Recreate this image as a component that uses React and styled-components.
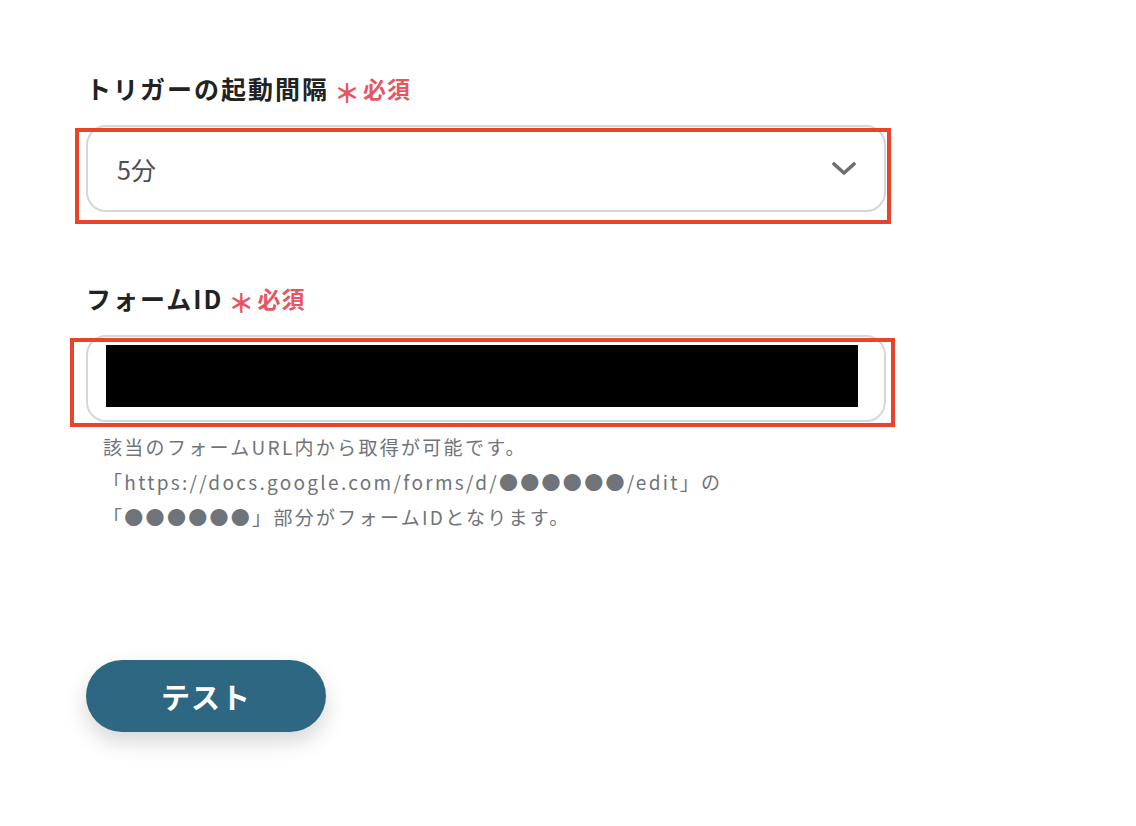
import React from "react";
import styled, { createGlobalStyle } from "styled-components";

const GlobalStyle = createGlobalStyle`
    body {
        margin: 0;
        background: #fff;
        font-family: "Noto Sans CJK JP", "Noto Sans", sans-serif;
    }
`;

const Page = styled.div`
    width: 1136px;
    height: 826px;
    box-sizing: border-box;
    padding: 70px 0 0 86px;
    background: #fff;
`;

const Field = styled.section`
    width: 800px;
    margin-bottom: ${p => p.$gap || 0}px;
`;

const Label = styled.div`
    display: flex;
    align-items: center;
    height: 36px;
    margin-bottom: 19px;
    font-size: 25px;
    font-weight: 700;
    letter-spacing: 2px;
    color: #222;

    .star{
        margin-left: 5px;
        font-size: 26px;
        letter-spacing: 0;
        color: #e8545f;
        transform: translateY(3px);
    }

    .req{
        margin-left: 3px;
        font-size: 23px;
        font-weight: 700;
        letter-spacing: 1px;
        color: #e8545f;
    }
`;

/* 赤枠の注釈 */
const Marked = styled.div`
    position: relative;

    &::after{
        content: "";
        position: absolute;
        top: ${p => p.$t}px;
        left: ${p => p.$l}px;
        right: ${p => p.$r}px;
        bottom: ${p => p.$b}px;
        border: 4px solid #e9432a;
        pointer-events: none;
    }
`;

const Box = styled.div`
    display: flex;
    align-items: center;
    box-sizing: border-box;
    height: 87px;
    border: 2px solid #d3d6da;
    border-radius: 20px;
    background: #fff;
`;

const Select = styled(Box)`
    justify-content: space-between;
    padding: 0 28px 0 29px;
    font-size: 25px;
    color: #4b5057;
`;

const Input = styled(Box)`
    align-items: stretch;
    padding: 8px 26px 13px 18px;
`;

const Redacted = styled.div`
    flex: 1;
    background: #000;
`;

const Help = styled.div`
    margin-top: 7px;
    padding-left: 17px;
    font-size: 19px;
    line-height: 35px;
    letter-spacing: 2.3px;
    color: #6f737a;
`;

const Button = styled.button`
    display: flex;
    align-items: center;
    justify-content: center;
    width: 240px;
    height: 72px;
    margin-top: 126px;
    border: none;
    border-radius: 36px;
    background: #2e6781;
    color: #fff;
    font-family: "Noto Sans CJK JP", sans-serif;
    font-size: 29px;
    font-weight: 700;
    letter-spacing: 1px;
    box-shadow: 0 10px 22px rgba(0, 0, 0, 0.16);
`;

const Chevron = () => (
    <svg width="24" height="16" viewBox="0 0 24 16">
        <polyline points="2,3 12,12 22,3" fill="none" stroke="#6e6e6e"
            strokeWidth="3.6" strokeLinecap="round" strokeLinejoin="round" />
    </svg>
);

const Required = () => <>
    <span className="star">＊</span>
    <span className="req">必須</span>
</>;

export default function App() {
    return <Page>
        <GlobalStyle />
        <Field $gap={68}>
            <Label>トリガーの起動間隔<Required /></Label>
            <Marked $t={3} $l={-11} $r={-5} $b={-12}>
                <Select>
                    <span>5分</span>
                    <Chevron />
                </Select>
            </Marked>
        </Field>

        <Field>
            <Label>フォームID<Required /></Label>
            <Marked $t={3} $l={-16} $r={-9} $b={-5}>
                <Input><Redacted /></Input>
            </Marked>
            <Help>
                <div>該当のフォームURL内から取得が可能です。</div>
                <div>「https://docs.google.com/forms/d/●●●●●●/edit」の</div>
                <div>「●●●●●●」部分がフォームIDとなります。</div>
            </Help>
        </Field>

        <Button>テスト</Button>
    </Page>;
}
